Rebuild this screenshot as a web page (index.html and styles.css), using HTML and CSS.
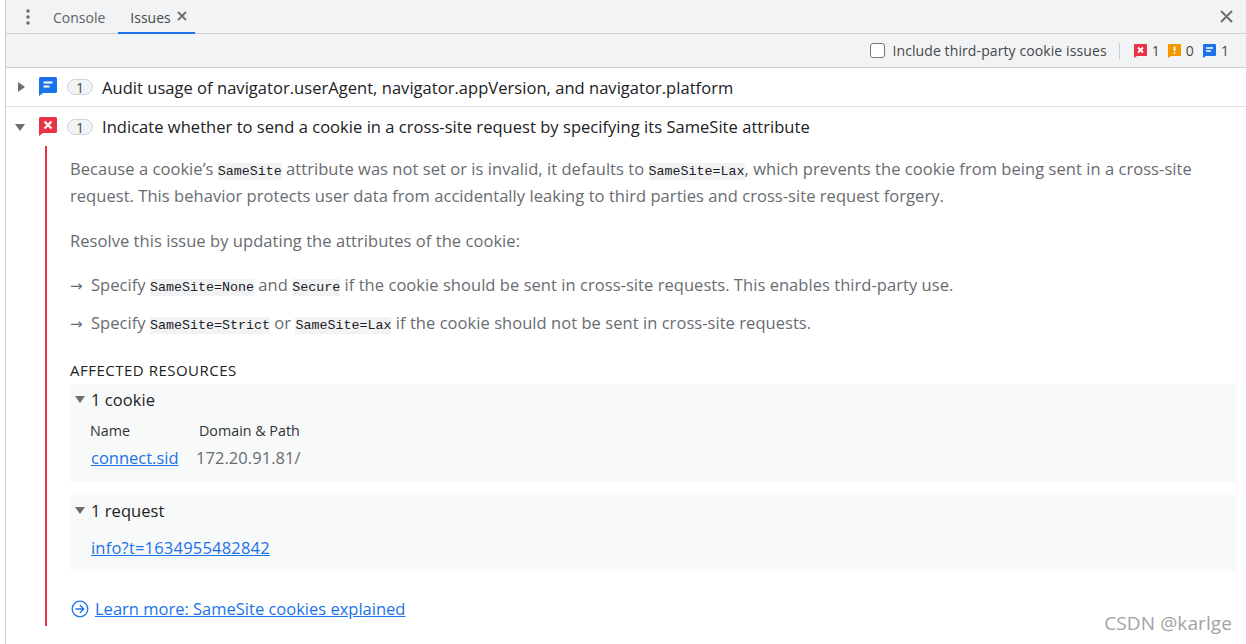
FILE: index.html
```html
<!DOCTYPE html>
<html lang="en">

<head>
    <title>Issues</title>
    <link rel="stylesheet" href="styles.css">
</head>

<body>
    <div class="devtools">
        <div class="tabbar">
            <svg class="menu-dots" width="4" height="16" viewBox="0 0 4 16"><circle cx="2" cy="2" r="1.8"/><circle cx="2" cy="8" r="1.8"/><circle cx="2" cy="14" r="1.8"/></svg>
            <div class="tab">Console</div>
            <div class="tab tab--active">Issues
                <svg class="tab-close" width="10" height="10" viewBox="0 0 10 10"><path d="M1 1l8 8M9 1l-8 8"/></svg>
            </div>
            <svg class="panel-close" width="13" height="13" viewBox="0 0 13 13"><path d="M1 1l11 11M12 1L1 12"/></svg>
        </div>

        <div class="toolbar">
            <label class="third-party"><span class="checkbox"></span>Include third-party cookie issues</label>
            <span class="toolbar-divider"></span>
            <span class="counter counter--first">
                <svg width="13" height="14" viewBox="0 0 13 14"><path class="fill-red" d="M1 0h11a1 1 0 0 1 1 1v10a1 1 0 0 1-1 1H3l-3 2V1a1 1 0 0 1 1-1z"/><path class="mark" d="M4 3.5l5 5M9 3.5l-5 5"/></svg>1
            </span>
            <span class="counter">
                <svg width="13" height="14" viewBox="0 0 13 14"><path class="fill-orange" d="M1 0h11a1 1 0 0 1 1 1v10a1 1 0 0 1-1 1H3l-3 2V1a1 1 0 0 1 1-1z"/><path class="mark" d="M6.5 2.5v4.5M6.5 8.2v1.600"/></svg>0
            </span>
            <span class="counter">
                <svg width="13" height="14" viewBox="0 0 13 14"><path class="fill-blue" d="M1 0h11a1 1 0 0 1 1 1v10a1 1 0 0 1-1 1H3l-3 2V1a1 1 0 0 1 1-1z"/><path class="mark mark--thin" d="M3 4h7M3 7h5"/></svg>1
            </span>
        </div>

        <div class="issue-row">
            <span class="arrow arrow--right"></span>
            <svg class="issue-icon" width="18" height="19" viewBox="0 0 18 19"><path class="fill-blue" d="M1.5 0h15A1.5 1.5 0 0 1 18 1.5v13a1.5 1.5 0 0 1-1.500 1.500H4L0 19V1.500A1.500 1.500 0 0 1 1.500 0z"/><path class="mark" d="M4.500 5.500h9M4.500 9.500h6"/></svg>
            <span class="count-pill">1</span>
            <span class="issue-title">Audit usage of navigator.userAgent, navigator.appVersion, and navigator.platform</span>
        </div>

        <div class="issue-row issue-row--open">
            <span class="arrow arrow--down"></span>
            <svg class="issue-icon" width="18" height="19" viewBox="0 0 18 19"><path class="fill-red" d="M1.500 0h15A1.500 1.500 0 0 1 18 1.500v13a1.500 1.500 0 0 1-1.500 1.500H4L0 19V1.500A1.500 1.500 0 0 1 1.500 0z"/><path class="mark mark--bold" d="M5.500 4.500l7 7M12.500 4.500l-7 7"/></svg>
            <span class="count-pill">1</span>
            <span class="issue-title">Indicate whether to send a cookie in a cross-site request by specifying its SameSite attribute</span>
        </div>

        <div class="issue-body">
            <p class="message">Because a cookie’s <code>SameSite</code> attribute was not set or is invalid, it defaults to <code>SameSite=Lax</code>, which prevents the cookie from being sent in a cross-site request. This behavior protects user data from accidentally leaking to third parties and cross-site request forgery.</p>
            <p class="message message--resolve">Resolve this issue by updating the attributes of the cookie:</p>
            <p class="message message--item"><span class="item-arrow">→</span>Specify <code>SameSite=None</code> and <code>Secure</code> if the cookie should be sent in cross-site requests. This enables third-party use.</p>
            <p class="message message--item"><span class="item-arrow">→</span>Specify <code>SameSite=Strict</code> or <code>SameSite=Lax</code> if the cookie should not be sent in cross-site requests.</p>

            <h2 class="affected-title">AFFECTED RESOURCES</h2>
            <div class="resource resource--cookie">
                <div class="resource-head"><span class="arrow arrow--down"></span>1 cookie</div>
                <div class="cookie-cols">
                    <span class="col-name">Name</span>
                    <span>Domain &amp; Path</span>
                </div>
                <div class="cookie-values">
                    <a class="link cookie-link">connect.sid</a>
                    <span class="domain">172.20.91.81/</span>
                </div>
            </div>
            <div class="resource resource--request">
                <div class="resource-head"><span class="arrow arrow--down"></span>1 request</div>
                <div class="request-value"><a class="link">info?t=1634955482842</a></div>
            </div>
            <div class="learn-more">
                <svg width="18" height="18" viewBox="0 0 18 18"><circle cx="9" cy="9" r="7.800"/><path d="M4.500 9h8M9 5.200L12.800 9 9 12.800"/></svg>
                <a class="link">Learn more: SameSite cookies explained</a>
            </div>
        </div>
    </div>
    <div class="watermark">CSDN @karlge</div>
</body>

</html>
```

FILE: styles.css
```css
html,
body {
    margin: 0;
    height: 100%;
    overflow: hidden;
    background: #fff;
}

body {
    position: relative;
    font-family: "Open Sans", "Noto Sans", sans-serif;
    color: #202124;
}

.devtools {
    margin-left: 5px;
    border-left: 1px solid #d0d0d0;
    height: 644px;
}

.tabbar {
    display: flex;
    align-items: center;
    height: 33px;
    background: #f1f3f4;
    border-bottom: 1px solid #cbcdd1;
    font-size: 14px;
    color: #5f6368;
}

.menu-dots {
    margin-left: 20px;
    fill: #6e6e6e;
}

.tab {
    height: 33px;
    line-height: 35px;
    margin-left: 23px;
}

.tab--active {
    display: flex;
    box-sizing: border-box;
    margin-left: 13px;
    padding: 0 8px 0 12px;
    border-bottom: 2px solid #1a73e8;
    height: 34px;
    color: #45484c;
}

.tab-close {
    margin: 11px 0 0 6px;
    fill: none;
    stroke: #6e6e6e;
    stroke-width: 1.800;
}

.panel-close {
    margin-left: auto;
    margin-right: 13px;
    fill: none;
    stroke: #6e6e6e;
    stroke-width: 2;
}

.toolbar {
    display: flex;
    align-items: center;
    justify-content: flex-end;
    height: 33px;
    padding-right: 17px;
    background: #f1f3f4;
    border-bottom: 1px solid #cbcdd1;
    font-size: 14px;
    letter-spacing: 0.1px;
    color: #45484c;
}

.third-party {
    display: flex;
    align-items: center;
}

.checkbox {
    box-sizing: border-box;
    width: 15px;
    height: 15px;
    margin-right: 7px;
    border: 1.500px solid #767676;
    border-radius: 3px;
    background: #fff;
}

.toolbar-divider {
    width: 1px;
    height: 16px;
    margin: 0 14px 0 12px;
    background: #cbcdd1;
}

.counter {
    display: flex;
    align-items: center;
    gap: 5px;
    margin-left: 9px;
}

.counter--first {
    margin-left: 0;
    margin-right: -1px;
}

.fill-red { fill: #ea3344; }
.fill-orange { fill: #f29900; }
.fill-blue { fill: #1a73e8; }

.mark {
    fill: none;
    stroke: #fff;
    stroke-width: 1.800;
}

.mark--thin {
    stroke-width: 1.500;
}

.mark--bold {
    stroke-width: 2.200;
}

.issue-row {
    display: flex;
    align-items: center;
    height: 38px;
    border-bottom: 1px solid #dfe1e5;
    font-size: 16.500px;
    letter-spacing: 0.04px;
}

.issue-row--open {
    height: 39px;
    border-bottom: 0;
}

.arrow {
    flex: none;
    width: 0;
    height: 0;
    border-style: solid;
    border-color: transparent;
}

.arrow--right {
    margin-left: 12px;
    margin-right: 14px;
    border-width: 5px 0 5px 7px;
    border-left-color: #6e6e6e;
}

.arrow--down {
    margin-left: 9px;
    margin-right: 14px;
    margin-top: 2px;
    border-width: 7px 5px 0;
    border-top-color: #6e6e6e;
}

.issue-icon {
    flex: none;
    margin-right: 10px;
    margin-top: -1px;
}

.count-pill {
    box-sizing: border-box;
    flex: none;
    width: 26px;
    height: 16px;
    margin-right: 9px;
    border: 1px solid #d0d2d6;
    border-radius: 8px;
    background: #f1f3f4;
    font-size: 14px;
    line-height: 15px;
    text-align: center;
    color: #45484c;
}

.issue-title {
    white-space: nowrap;
}

.issue-body {
    margin: 0 10px 0 39px;
    padding: 9px 0 0 23px;
    height: 471px;
    border-left: 2px solid #ea3344;
    color: #686c71;
    font-size: 16.500px;
    letter-spacing: 0.05px;
}

.message {
    margin: 0;
    line-height: 27px;
}

.message--resolve {
    margin-top: 18px;
}

.message--item {
    margin-top: 11px;
}

.message--resolve + .message--item {
    margin-top: 17px;
}

.item-arrow {
    display: inline-block;
    width: 21px;
    font-family: "DejaVu Sans", sans-serif;
    font-size: 15px;
    line-height: 1;
}

code {
    padding: 1px 0;
    background: #f1f3f4;
    font-family: "Liberation Mono", monospace;
    font-size: 13.330px;
    line-height: 1;
    letter-spacing: 0;
    color: #202124;
}

.affected-title {
    margin: 24px 0 4px;
    font-size: 15px;
    font-weight: 500;
    line-height: 20px;
    letter-spacing: 0.5px;
    color: #202124;
}

.resource {
    background: #f8f9f9;
}

.resource--cookie {
    height: 98px;
    margin-bottom: 13px;
}

.resource--request {
    height: 76px;
}

.resource-head {
    display: flex;
    align-items: center;
    height: 31px;
    color: #202124;
}

.resource-head .arrow {
    margin-left: 5px;
    margin-right: 6px;
    margin-top: 0;
    border-width: 7px 5px 0;
}

.cookie-cols {
    display: flex;
    height: 28px;
    padding-left: 20px;
    font-size: 14.300px;
    line-height: 32px;
    letter-spacing: 0;
    color: #303336;
}

.col-name {
    width: 109px;
}

.cookie-values {
    display: flex;
    padding-left: 21px;
    line-height: 30px;
}

.cookie-link {
    width: 105px;
    letter-spacing: 0;
}

.request-value {
    padding: 7px 0 0 21px;
    line-height: 30px;
    letter-spacing: 0.2px;
}

.link {
    color: #1a73e8;
    text-decoration: underline;
}

.learn-more {
    display: flex;
    align-items: center;
    gap: 6px;
    margin-top: 26px;
    margin-left: 1px;
    letter-spacing: 0;
}

.learn-more svg {
    fill: none;
    stroke: #1a73e8;
    stroke-width: 1.300;
}

.watermark {
    position: absolute;
    right: 14px;
    bottom: 8px;
    font-size: 19px;
    letter-spacing: 0.1px;
    color: #a3a3a3;
}
```
